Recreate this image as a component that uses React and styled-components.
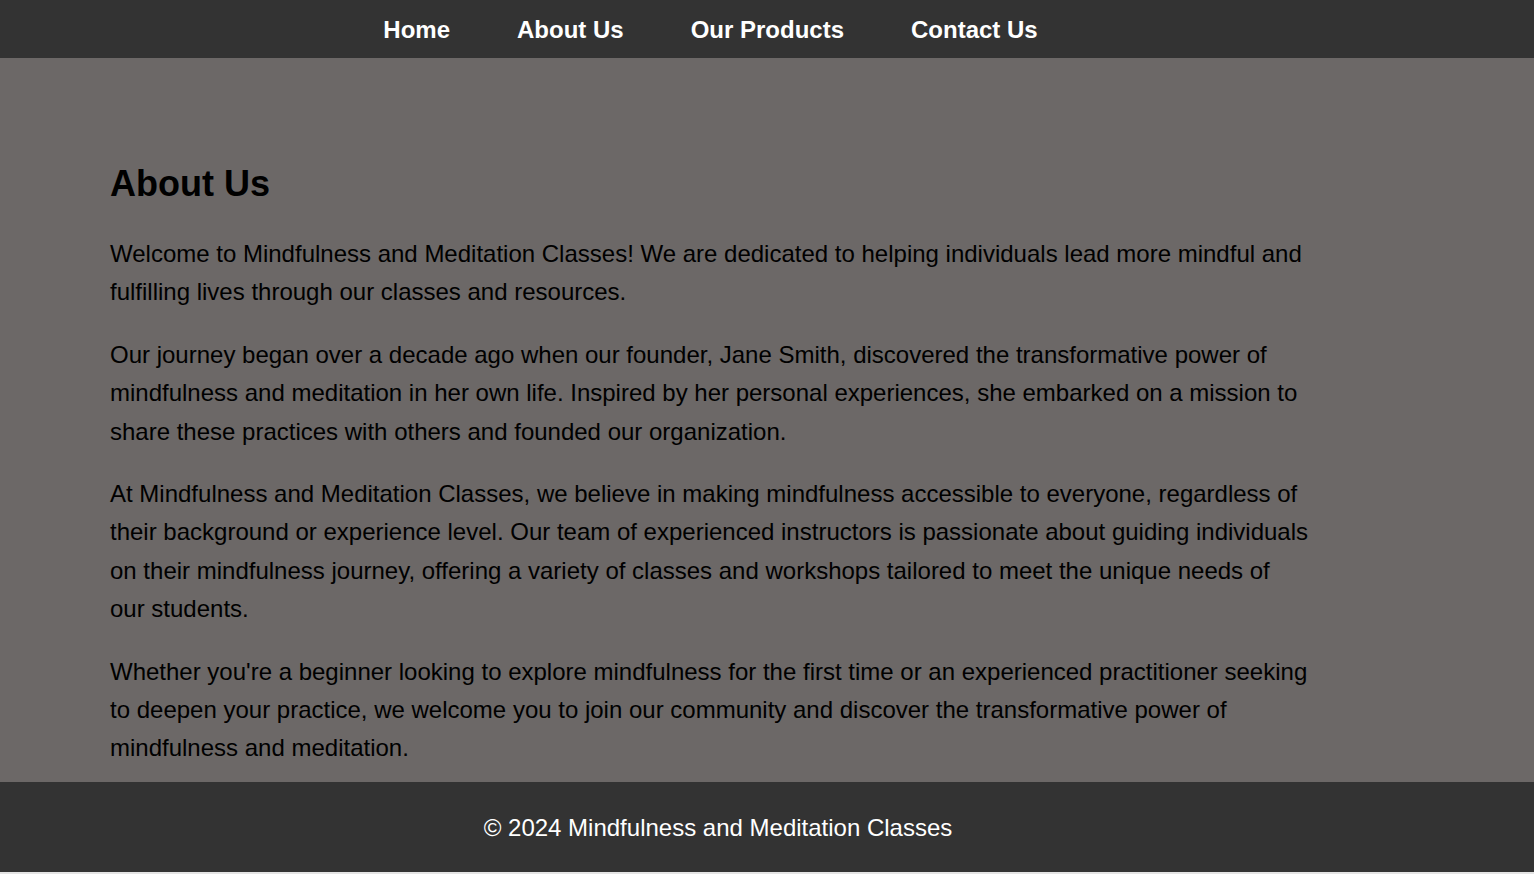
import styled, { createGlobalStyle } from "styled-components";

const GlobalStyle = createGlobalStyle`
  body {
    margin: 0;
    background-color: #e4e4e4;
    font-family: "Liberation Sans", Arial, sans-serif;
  }
`;

const Page = styled.div`
  display: flex;
  flex-direction: column;
  padding-bottom: 2px;
`;

const NavBar = styled.nav`
  background-color: #333;
  height: 58px;
  display: flex;
  align-items: center;
  justify-content: center;
  padding: 2px 113px 0 0;
  box-sizing: border-box;
`;

const NavList = styled.ul`
  display: flex;
  gap: 67px;
  list-style: none;
  margin: 0;
  padding: 0;
`;

const NavLink = styled.a`
  color: #fff;
  font-size: 24px;
  font-weight: 700;
  text-decoration: none;
`;

const Main = styled.main`
  background-color: #6c6867;
  padding: 103px 110px 14px;
`;

const Content = styled.section`
  max-width: 1200px;
`;

const Heading = styled.h2`
  margin: 2px 0 30px;
  font-size: 36px;
  font-weight: 700;
  color: #000;
`;

const Paragraph = styled.p`
  margin: 0 0 24px;
  font-size: 24px;
  line-height: 38.4px;
  color: #000;

  &:last-child {
    margin-bottom: 0;
  }
`;

const Footer = styled.footer`
  background-color: #333;
  height: 90px;
  display: flex;
  align-items: center;
  justify-content: center;
  padding: 2px 98px 0 0;
  box-sizing: border-box;
  color: #fff;
  font-size: 24px;
`;

const links = ["Home", "About Us", "Our Products", "Contact Us"];

const paragraphs = [
  "Welcome to Mindfulness and Meditation Classes! We are dedicated to helping individuals lead more mindful and fulfilling lives through our classes and resources.",
  "Our journey began over a decade ago when our founder, Jane Smith, discovered the transformative power of mindfulness and meditation in her own life. Inspired by her personal experiences, she embarked on a mission to share these practices with others and founded our organization.",
  "At Mindfulness and Meditation Classes, we believe in making mindfulness accessible to everyone, regardless of their background or experience level. Our team of experienced instructors is passionate about guiding individuals on their mindfulness journey, offering a variety of classes and workshops tailored to meet the unique needs of our students.",
  "Whether you're a beginner looking to explore mindfulness for the first time or an experienced practitioner seeking to deepen your practice, we welcome you to join our community and discover the transformative power of mindfulness and meditation.",
];

function App() {
  return (
    <Page>
      <GlobalStyle />
      <NavBar>
        <NavList>
          {links.map((link) => (
            <li key={link}>
              <NavLink href="#">{link}</NavLink>
            </li>
          ))}
        </NavList>
      </NavBar>
      <Main>
        <Content>
          <Heading>About Us</Heading>
          {paragraphs.map((text, i) => (
            <Paragraph key={i}>{text}</Paragraph>
          ))}
        </Content>
      </Main>
      <Footer>&copy; 2024 Mindfulness and Meditation Classes</Footer>
    </Page>
  );
}

export default App;
